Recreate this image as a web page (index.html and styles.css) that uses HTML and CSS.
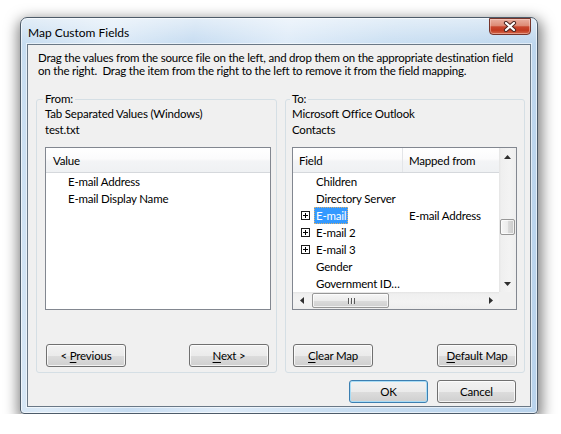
FILE: index.html
```html
<!DOCTYPE html>
<html lang="en">
<head>
<meta charset="utf-8">
<title>Map Custom Fields</title>
<link rel="stylesheet" href="styles.css">
</head>
<body>
<div class="desk">
  <div class="window">
    <div class="titlebar">
      <span class="title">Map Custom Fields</span>
      <div class="close" aria-label="Close">
        <svg width="14" height="11" viewBox="0 0 14 11">
          <path d="M3 2 L11 9 M11 2 L3 9" stroke="#4a2520" stroke-width="4.2" stroke-linecap="round" fill="none"/>
          <path d="M3 2 L11 9 M11 2 L3 9" stroke="#ffffff" stroke-width="2.2" stroke-linecap="round" fill="none"/>
        </svg>
      </div>
    </div>
    <div class="client">
      <p class="intro">Drag the values from the source file on the left, and drop them on the appropriate destination field<br>on the right.&nbsp; Drag the item from the right to the left to remove it from the field mapping.</p>
      <div class="groups">
        <fieldset class="group group-from">
          <legend>From:</legend>
          <div class="source">Tab Separated Values (Windows)</div>
          <div class="source">test.txt</div>
          <div class="list list-from">
            <div class="lv-head"><div class="lv-col lv-col-value">Value</div></div>
            <div class="lv-body">
              <div class="lv-row lv-row-plain">E-mail Address</div>
              <div class="lv-row lv-row-plain">E-mail Display Name</div>
            </div>
          </div>
          <div class="group-buttons group-buttons-from">
            <button class="btn">&lt; <u>P</u>revious</button>
            <button class="btn"><u>N</u>ext &gt;</button>
          </div>
        </fieldset>
        <fieldset class="group group-to">
          <legend>To:</legend>
          <div class="source">Microsoft Office Outlook</div>
          <div class="source">Contacts</div>
          <div class="list list-to">
            <div class="lv-main">
              <div class="lv-head">
                <div class="lv-col lv-col-field">Field</div>
                <div class="lv-col lv-col-mapped">Mapped from</div>
              </div>
              <div class="lv-body">
                <div class="lv-row"><span class="cell-field"><span class="expander none"></span><span class="name">Children</span></span><span class="cell-mapped"></span></div>
                <div class="lv-row"><span class="cell-field"><span class="expander none"></span><span class="name">Directory Server</span></span><span class="cell-mapped"></span></div>
                <div class="lv-row"><span class="cell-field"><span class="expander"><svg width="9" height="9" viewBox="0 0 9 9"><rect x="0.5" y="0.5" width="8" height="8" fill="#fff" stroke="#1c1c1c"/><path d="M2 4.5H7M4.5 2V7" stroke="#000"/></svg></span><span class="name selected">E-mail</span></span><span class="cell-mapped">E-mail Address</span></div>
                <div class="lv-row"><span class="cell-field"><span class="expander"><svg width="9" height="9" viewBox="0 0 9 9"><rect x="0.5" y="0.5" width="8" height="8" fill="#fff" stroke="#1c1c1c"/><path d="M2 4.5H7M4.5 2V7" stroke="#000"/></svg></span><span class="name">E-mail 2</span></span><span class="cell-mapped"></span></div>
                <div class="lv-row"><span class="cell-field"><span class="expander"><svg width="9" height="9" viewBox="0 0 9 9"><rect x="0.5" y="0.5" width="8" height="8" fill="#fff" stroke="#1c1c1c"/><path d="M2 4.5H7M4.5 2V7" stroke="#000"/></svg></span><span class="name">E-mail 3</span></span><span class="cell-mapped"></span></div>
                <div class="lv-row"><span class="cell-field"><span class="expander none"></span><span class="name">Gender</span></span><span class="cell-mapped"></span></div>
                <div class="lv-row"><span class="cell-field"><span class="expander none"></span><span class="name">Government ID…</span></span><span class="cell-mapped"></span></div>
              </div>
            </div>
            <div class="vscroll">
              <div class="sb-btn"><svg width="7" height="4" viewBox="0 0 7 4"><polygon points="0,4 7,4 3.5,0" fill="#2f2f2f"/></svg></div>
              <div class="sb-track-v"><div class="thumb-v"></div></div>
              <div class="sb-btn"><svg width="7" height="4" viewBox="0 0 7 4"><polygon points="0,0 7,0 3.5,4" fill="#2f2f2f"/></svg></div>
            </div>
            <div class="hscroll">
              <div class="sb-btn"><svg width="4" height="7" viewBox="0 0 4 7"><polygon points="4,0 4,7 0,3.5" fill="#2f2f2f"/></svg></div>
              <div class="sb-track-h"><div class="thumb-h"><span class="grip"></span></div></div>
              <div class="sb-btn"><svg width="4" height="7" viewBox="0 0 4 7"><polygon points="0,0 0,7 4,3.5" fill="#2f2f2f"/></svg></div>
            </div>
            <div class="sb-corner"></div>
          </div>
          <div class="group-buttons group-buttons-to">
            <button class="btn"><u>C</u>lear Map</button>
            <button class="btn"><u>D</u>efault Map</button>
          </div>
        </fieldset>
      </div>
      <div class="dialog-buttons">
        <button class="btn btn-dlg btn-default">OK</button>
        <button class="btn btn-dlg">Cancel</button>
      </div>
    </div>
  </div>
</div>
</body>
</html>
```
FILE: styles.css
```css
* { box-sizing: border-box; }
html, body { margin: 0; background: #ffffff; }
body {
  font-family: "Lato", "Noto Sans", sans-serif;
  font-size: 11.5px;
  letter-spacing: -0.2px;
  color: #000;
}
.desk { padding: 17px 0 0 20px; }

.window {
  width: 518px;
  height: 397px;
  border: 1px solid #4d5b69;
  border-radius: 7px 7px 4px 4px;
  background:
    linear-gradient(180deg, rgba(255,255,255,0.5) 0, rgba(255,255,255,0) 26px),
    linear-gradient(100deg, #c6dcf0 0%, #dceaf7 16%, #c6dcf1 30%, #deebf8 46%, #cadff2 64%, #b9d3ec 100%);
  box-shadow: 1px 5px 14px 3px rgba(0,0,0,0.5), inset 0 0 0 1px rgba(255,255,255,0.6);
  padding: 0 6px 6px 6px;
  display: flex;
  flex-direction: column;
}
.titlebar {
  height: 26px;
  display: flex;
  justify-content: space-between;
  align-items: flex-start;
}
.title { padding: 8px 0 0 1px; line-height: 14px; font-size: 12px; letter-spacing: 0; }
.close {
  width: 42px;
  height: 17px;
  border: 1px solid #76342a;
  border-radius: 0 0 4px 4px;
  background: linear-gradient(180deg, #eab0a0 0%, #dd8a74 45%, #c9472e 52%, #c23a20 75%, #d4694c 100%);
  box-shadow: inset 0 0 0 1px rgba(255,220,210,0.45);
  display: flex;
  align-items: center;
  justify-content: center;
}
.close svg { display: block; }

.client {
  flex: 1;
  background: #f0f0f0;
  border: 1px solid #6a7886;
  box-shadow: 0 0 0 1px rgba(255,255,255,0.55);
  display: flex;
  flex-direction: column;
  padding-top: 6px;
}
.intro { margin: 0; padding: 0 10px; line-height: 13px; white-space: nowrap; }

.groups { display: flex; gap: 8px; padding-left: 8px; margin-top: 15px; }
.group {
  margin: 0;
  min-width: 0;
  border: 1px solid #d5dfe5;
  border-radius: 3px;
  padding: 0 5px 5px 8px;
  display: flex;
  flex-direction: column;
}
.group legend { padding: 0 2px; margin-left: -2px; line-height: 14px; }
.group-from { width: 241px; }
.group-to { width: 240px; padding-left: 6px; padding-right: 7px; }
.source { line-height: 16px; }

.list {
  margin-top: 9px;
  height: 163px;
  border: 1px solid #828790;
  background: #fff;
}
.list-from { width: 226px; }
.list-to {
  width: 225px;
  display: grid;
  grid-template-columns: 1fr 17px;
  grid-template-rows: 1fr 17px;
}
.lv-main { overflow: hidden; }
.lv-head {
  height: 25px;
  display: flex;
  background: linear-gradient(180deg, #ffffff 0%, #fbfbfc 45%, #f3f4f6 55%, #eff1f3 100%);
  border-bottom: 1px solid #d5d8dc;
}
.lv-col { display: flex; align-items: center; padding-top: 1px; }
.lv-col-value { padding-left: 7px; }
.lv-col-field { width: 110px; padding-left: 6px; border-right: 1px solid #e3e5e8; }
.lv-col-mapped { padding-left: 6px; flex: 1; }
.lv-row { height: 17px; line-height: 17px; display: flex; white-space: nowrap; }
.lv-row-plain { padding-left: 22px; }
.cell-field { width: 110px; flex: none; display: flex; align-items: center; padding-left: 8px; }
.cell-mapped { padding-left: 6px; }
.expander { width: 9px; height: 9px; flex: none; margin-right: 4px; display: block; }
.expander svg { display: block; }
.name { padding: 0 2px; line-height: 17px; flex: none; }
.name.selected {
  background: #3399ff;
  color: #fff;
  outline: 1px dotted #d8b070;
  outline-offset: -1px;
}

.vscroll {
  display: flex;
  flex-direction: column;
  background: linear-gradient(90deg, #e4e4e4 0, #efefef 2px, #f3f3f3 60%, #eeeeee 100%);
}
.hscroll {
  display: flex;
  background: linear-gradient(180deg, #e4e4e4 0, #efefef 2px, #f3f3f3 60%, #eeeeee 100%);
}
.sb-btn { width: 17px; height: 17px; flex: none; display: flex; align-items: center; justify-content: center; }
.sb-btn svg { display: block; }
.sb-track-v { flex: 1; }
.thumb-v {
  margin: 54px 0 0 1px;
  width: 15px;
  height: 16px;
  border: 1px solid #979797;
  border-radius: 2px;
  background: linear-gradient(90deg, #f6f6f6 0%, #ececec 50%, #dcdcdc 51%, #c9c9c9 100%);
  box-shadow: inset 0 0 0 1px rgba(255,255,255,0.7);
}
.sb-track-h { flex: 1; display: flex; align-items: center; }
.thumb-h {
  margin-left: 2px;
  width: 77px;
  height: 15px;
  border: 1px solid #979797;
  border-radius: 2px;
  background: linear-gradient(180deg, #f6f6f6 0%, #ececec 50%, #dcdcdc 51%, #cfcfcf 100%);
  box-shadow: inset 0 0 0 1px rgba(255,255,255,0.7);
  display: flex;
  align-items: center;
  justify-content: center;
}
.grip {
  width: 7px;
  height: 6px;
  background: repeating-linear-gradient(90deg, #5a5a5a 0, #5a5a5a 1px, #f4f4f4 1px, #f4f4f4 2px, transparent 2px, transparent 3px);
  margin-left: 2px;
}
.sb-corner { background: #f0f0f0; }

.group-buttons { margin-top: 34px; display: flex; justify-content: space-between; }
.group-buttons-from { padding: 0 2px 0 1px; }
.group-buttons-to { padding: 0 0 0 1px; }

.btn {
  width: 80px;
  height: 23px;
  padding: 0;
  font: inherit;
  letter-spacing: inherit;
  color: #000;
  border: 1px solid #707070;
  border-radius: 3px;
  background: linear-gradient(180deg, #f2f2f2 0%, #ebebeb 50%, #dddddd 50%, #cfcfcf 100%);
  box-shadow: inset 0 0 0 1px rgba(255,255,255,0.75);
}
.btn u { text-decoration-thickness: 1px; text-underline-offset: 2px; }

.dialog-buttons {
  margin-top: 7px;
  display: flex;
  justify-content: flex-end;
  gap: 9px;
  padding-right: 14px;
}
.btn-dlg { width: 79px; }
.btn-default {
  border-color: #3c7fb1;
  box-shadow: inset 0 0 0 1px #a9dcf5;
}
```
